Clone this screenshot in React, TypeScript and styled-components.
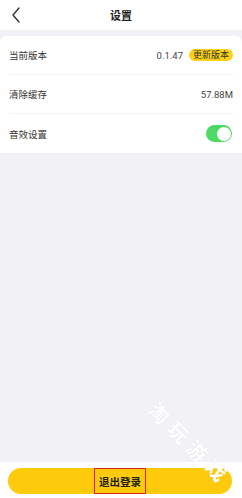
import styled, { createGlobalStyle } from "styled-components";

const GlobalStyle = createGlobalStyle`
  html, body {
    margin: 0;
    padding: 0;
    background: #f2f2f6;
    font-family: "Noto Sans CJK SC", "Noto Sans", sans-serif;
  }
  * { box-sizing: border-box; }
`;

const App = () => {
  return (
    <Page>
      <GlobalStyle />
      <Header>
        <BackButton>
          <svg width="10" height="16" viewBox="0 0 10 16">
            <path d="M8 1 L2 8 L8 15" fill="none" stroke="#333" strokeWidth="1.4" strokeLinecap="round" strokeLinejoin="round" />
          </svg>
        </BackButton>
        <Title>设置</Title>
      </Header>
      <Card>
        <Row>
          <Label>当前版本</Label>
          <Value>
            0.1.47
            <Badge>更新版本</Badge>
          </Value>
        </Row>
        <Row>
          <Label>清除缓存</Label>
          <Value>57.88M</Value>
        </Row>
        <Row $last>
          <Label>音效设置</Label>
          <Toggle>
            <Knob />
          </Toggle>
        </Row>
      </Card>
      <Spacer />
      <Footer>
        <LogoutButton>
          <LogoutText>退出登录</LogoutText>
        </LogoutButton>
      </Footer>
      <Watermark>淘玩游戏</Watermark>
    </Page>
  );
};

export default App;

const Page = styled.div`
  position: relative;
  width: 242px;
  height: 498px;
  display: flex;
  flex-direction: column;
  background: #f2f2f6;
  overflow: hidden;
`;

const Header = styled.div`
  position: relative;
  height: 30px;
  background: #fff;
  display: flex;
  align-items: center;
  justify-content: center;
`;

const BackButton = styled.div`
  position: absolute;
  left: 11px;
  top: 7px;
  display: flex;
`;

const Title = styled.div`
  font-size: 11px;
  font-weight: 700;
  color: #222;
`;

const Card = styled.div`
  margin-top: 6px;
  background: #fff;
  border-radius: 6px 6px 0 0;
  padding: 0 9px;
`;

const Row = styled.div<{ $last?: boolean }>`
  height: 39px;
  display: flex;
  align-items: center;
  justify-content: space-between;
  border-bottom: ${({ $last }) => ($last ? "none" : "1px solid #f3f3f5")};
`;

const Label = styled.div`
  font-size: 9.5px;
  color: #333;
`;

const Value = styled.div`
  display: flex;
  align-items: center;
  gap: 6px;
  font-size: 9.5px;
  color: #444;
  font-family: Roboto, "Noto Sans CJK SC", sans-serif;
`;

const Badge = styled.span`
  height: 12px;
  padding: 0 4px;
  border-radius: 6px;
  background: #fcd116;
  color: #333;
  font-size: 9px;
  line-height: 12px;
  font-family: "Noto Sans CJK SC", sans-serif;
`;

const Toggle = styled.div`
  width: 26px;
  height: 17px;
  border-radius: 9px;
  background: #4cd964;
  display: flex;
  align-items: center;
  justify-content: flex-end;
  padding: 1.5px;
  margin-right: 1px;
`;

const Knob = styled.div`
  width: 14px;
  height: 14px;
  border-radius: 50%;
  background: #fff;
`;

const Spacer = styled.div`
  flex: 1;
`;

const Footer = styled.div`
  height: 36px;
  background: #fff;
  padding: 6px 10px 4px 8px;
`;

const LogoutButton = styled.div`
  height: 26px;
  border-radius: 13px;
  background: #fdca0c;
  display: flex;
  align-items: center;
  justify-content: center;
`;

const LogoutText = styled.div`
  height: 26px;
  padding: 0 4px;
  border: 1.5px solid #e0231a;
  display: flex;
  align-items: center;
  font-size: 10.5px;
  font-weight: 700;
  color: #222;
`;

const Watermark = styled.div`
  position: absolute;
  left: 160px;
  top: 398px;
  transform: rotate(45deg);
  transform-origin: left top;
  font-size: 20px;
  line-height: 22px;
  font-weight: 700;
  color: #fff;
  letter-spacing: 7px;
  white-space: nowrap;
  text-shadow: 0 0 1px rgba(0, 0, 0, 0.1);
`;
